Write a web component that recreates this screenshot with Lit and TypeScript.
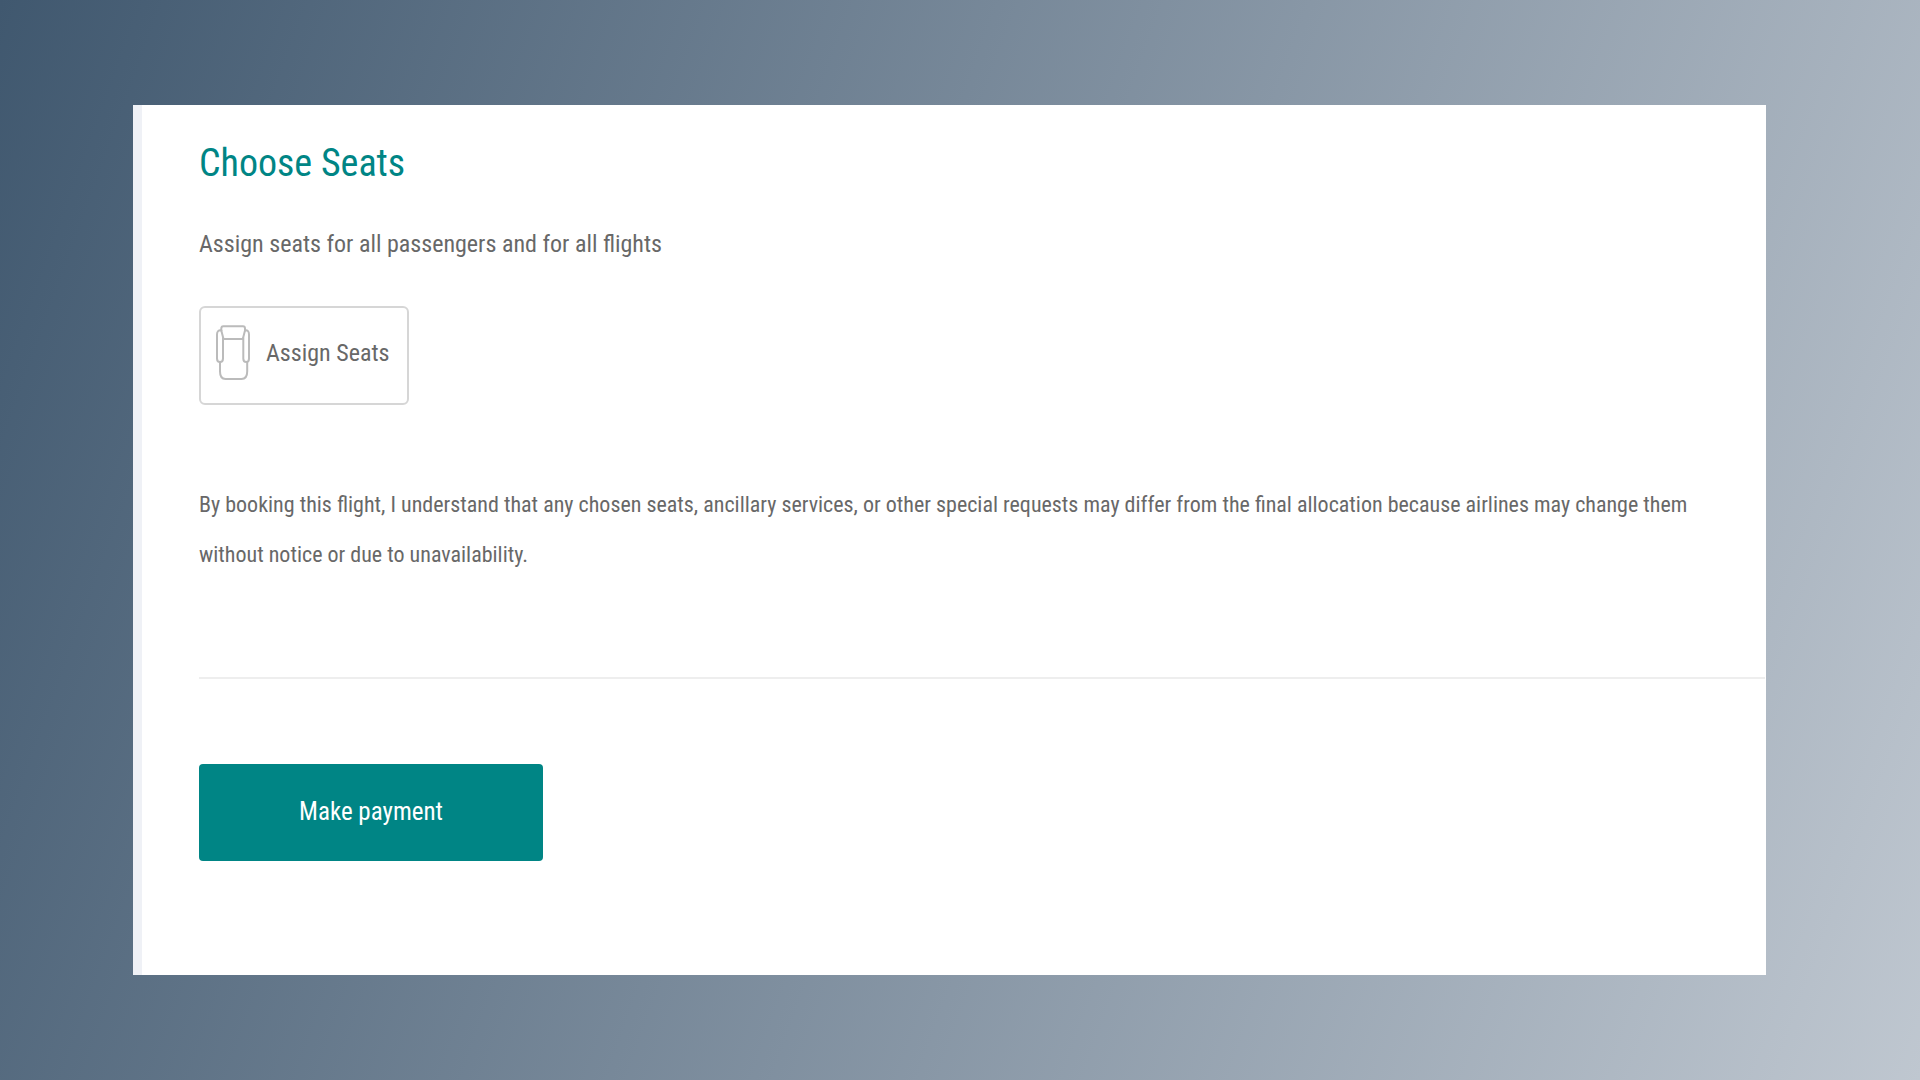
import { LitElement, html, css } from "lit";
import { customElement } from "lit/decorators.js";

@customElement("seat-icon")
export class SeatIcon extends LitElement {
  static styles = css`
    :host {
      display: block;
      flex: none;
    }
    .icon {
      display: block;
      fill: none;
      stroke: #bbbbbb;
      stroke-width: 2;
      stroke-linejoin: round;
      stroke-linecap: round;
    }
  `;

  render() {
    return html`
      <svg class="icon" width="34" height="56" viewBox="0 0 34 56" aria-hidden="true">
        <path d="M5.3 5.5V3.6Q5.3 1.2 7.3 1.2H27Q29 1.2 29 3.6V5.5" />
        <path d="M5.3 5.5L7.5 14H26.8L29 5.5" />
        <path d="M5.3 5.4Q1 4.8 1 9.5V33.5Q1 37 4 37Q7 37 7 33.5V13" />
        <path d="M29 5.4Q33 4.8 33 9.5V33.5Q33 37 30.3 37Q27.3 37 27.3 33.5V13" />
        <path d="M4 37.5V46.5Q4 54 9.5 54H25.5Q31.2 54 31.2 46.5V37.5" />
      </svg>
    `;
  }
}

@customElement("app-root")
export class AppRoot extends LitElement {
  static styles = css`
    :host {
      display: block;
      min-height: 100vh;
      box-sizing: border-box;
      padding: 105px 8% 105px 133px;
      background: linear-gradient(110deg, #40586f, #bfc7d0);
      font-family: "Roboto Condensed", "Liberation Sans", sans-serif;
      color: #686868;
    }
    .card {
      box-sizing: border-box;
      min-height: calc(100vh - 210px);
      background: #ffffff;
      border-left: 9px solid #eff1f6;
      padding: 28px 0 112px 57px;
    }
    .title {
      margin: 0;
      font-size: 38px;
      line-height: 60px;
      font-weight: 400;
      color: #008585;
    }
    .intro,
    .terms {
      margin: 0;
      line-height: 50px;
    }
    .intro {
      margin-top: 26px;
      font-size: 24px;
    }
    .terms {
      margin-top: 75px;
      padding-right: 32px;
      font-size: 22px;
    }
    .assign,
    .pay {
      box-sizing: border-box;
      display: flex;
      align-items: center;
      font-family: inherit;
      font-size: 24px;
      cursor: pointer;
    }
    .assign {
      gap: 16px;
      min-height: 99px;
      margin-top: 37px;
      padding: 0 18px 5px 15px;
      border: 2px solid #d6d6d6;
      border-radius: 6px;
      background: #ffffff;
      color: #686868;
    }
    .rule {
      height: 2px;
      margin: 97px 1px 0 0;
      border: 0;
      background: #eeeeee;
    }
    .pay {
      justify-content: center;
      min-width: 344px;
      min-height: 97px;
      margin-top: 85px;
      padding: 0 24px 2px;
      border: 0;
      border-radius: 4px;
      background: #008585;
      color: #ffffff;
      font-size: 25px;
    }
  `;

  render() {
    return html`
      <main class="card">
        <h1 class="title">Choose Seats</h1>
        <p class="intro">Assign seats for all passengers and for all flights</p>
        <button class="assign" type="button">
          <seat-icon></seat-icon>
          <span>Assign Seats</span>
        </button>
        <p class="terms">
          By booking this flight, I understand that any chosen seats, ancillary services, or other
          special requests may differ from the final allocation because airlines may change them
          without notice or due to unavailability.
        </p>
        <hr class="rule" />
        <button class="pay" type="button">Make payment</button>
      </main>
    `;
  }
}
